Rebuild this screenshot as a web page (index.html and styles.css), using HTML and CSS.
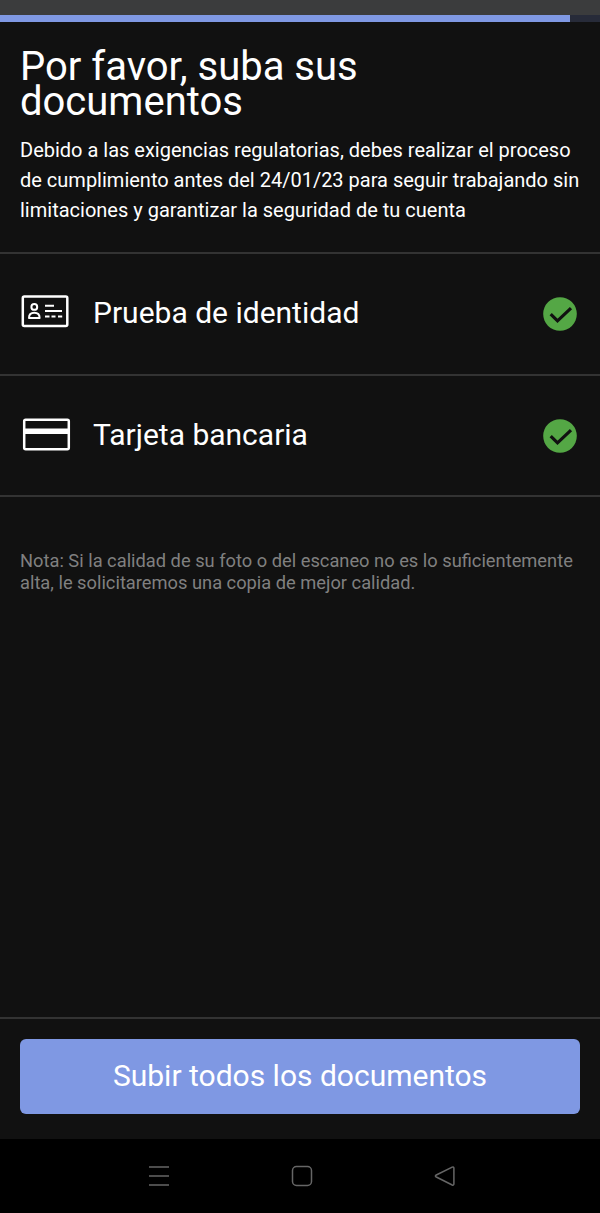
FILE: index.html
```
<!DOCTYPE html>
<html lang="es">
<head>
    <meta charset="UTF-8">
    <meta name="viewport" content="width=device-width, initial-scale=1.0">
    <title>Por favor, suba sus documentos</title>
    <link rel="stylesheet" href="styles.css">
</head>
<body>
    <div class="top-bar"></div>
    <div class="progress">
        <div class="progress-fill" style="width: 95%"></div>
    </div>

    <header class="intro">
        <h1>Por favor, suba sus documentos</h1>
        <p>Debido a las exigencias regulatorias, debes realizar el proceso de cumplimiento antes del 24/01/23 para seguir trabajando sin limitaciones y garantizar la seguridad de tu cuenta</p>
    </header>

    <main class="content">
        <ul class="documents">
            <li class="document">
                <svg class="document-icon" width="54" height="40" viewBox="0 0 54 40" fill="none" stroke="#fff" stroke-width="2">
                    <rect x="2.8" y="3.5" width="44.5" height="29.5" rx="1.5" stroke-width="2.5"/>
                    <circle cx="14.3" cy="13.9" r="2.9"/>
                    <path d="M9 25c0-3.600 2-5.200 5.300-5.200s5.300 1.600 5.300 5.200z" stroke-linejoin="round"/>
                    <path d="M25 12.8h9M25 18h17M25 23.500h4.500M31.500 23.500h4M38 23.500h4.200"/>
                </svg>
                <span class="document-name">Prueba de identidad</span>
                <svg class="check" width="34" height="34" viewBox="0 0 34 34">
                    <circle cx="17" cy="17" r="16.8" fill="#54a745"/>
                    <path d="M7.700 17.200l6.800 6.700L28 11.200" fill="none" stroke="#111" stroke-width="3.2"/>
                </svg>
            </li>
            <li class="document">
                <svg class="document-icon" width="54" height="40" viewBox="0 0 54 40" fill="none" stroke="#fff">
                    <rect x="4.200" y="4.700" width="44.600" height="29.600" rx="1.500" stroke-width="2.500"/>
                    <path d="M4 16.200h45" stroke-width="5.400"/>
                </svg>
                <span class="document-name">Tarjeta bancaria</span>
                <svg class="check" width="34" height="34" viewBox="0 0 34 34">
                    <circle cx="17" cy="17" r="16.8" fill="#54a745"/>
                    <path d="M7.700 17.200l6.800 6.700L28 11.200" fill="none" stroke="#111" stroke-width="3.2"/>
                </svg>
            </li>
        </ul>
        <p class="note">Nota: Si la calidad de su foto o del escaneo no es lo suficientemente alta, le solicitaremos una copia de mejor calidad.</p>
    </main>

    <footer class="actions">
        <button class="upload" type="button">Subir todos los documentos</button>
    </footer>

    <nav class="system-nav">
        <svg width="24" height="24" viewBox="0 0 24 24">
            <path d="M2 3h20M2 12h20M2 21h20"/>
        </svg>
        <svg width="24" height="24" viewBox="0 0 24 24">
            <rect x="2.500" y="2.500" width="19" height="19" rx="4"/>
        </svg>
        <svg width="24" height="24" viewBox="0 0 24 24">
            <path d="M19.200 3.100L3.300 11q-1.800 1 0 2l15.900 8q1.700.600 1.700-1.200V4.300q0-1.800-1.700-1.200z"/>
        </svg>
    </nav>
</body>
</html>
```

FILE: styles.css
```
* {
    box-sizing: border-box;
}
body {
    font-family: Roboto, "Liberation Sans", sans-serif;
    background-color: #111;
    color: #fff;
    margin: 0;
    height: 1213px;
    display: flex;
    flex-direction: column;
}
.top-bar {
    height: 15px;
    background-color: #3b3c3d;
}
.progress {
    height: 7px;
    background-color: #272b39;
}
.progress-fill {
    height: 100%;
    background-color: #7f98e3;
}
.intro {
    height: 230px;
    padding: 27px 20px 0;
}
.intro h1 {
    margin: 0 0 16px;
    max-width: 400px;
    font-size: 40px;
    font-weight: 400;
    line-height: 35px;
}
.intro p {
    margin: 0;
    font-size: 20px;
    line-height: 30px;
}
.content {
    flex: 1;
}
.documents {
    list-style: none;
    margin: 0;
    padding: 0;
    border-top: 2px solid #333;
}
.document {
    display: flex;
    align-items: center;
    height: 122px;
    padding: 0 23px 0 20px;
    border-bottom: 2px solid #333;
}
.document:last-child {
    height: 121px;
}
.document-icon {
    margin: 0 19px 2px 0;
}
.document-name {
    flex: 1;
    padding-bottom: 3px;
    font-size: 30px;
}
.note {
    margin: 53px 20px 0;
    font-size: 18.3px;
    line-height: 22px;
    color: #808080;
}
.actions {
    height: 122px;
    padding: 20px 20px 0;
    border-top: 2px solid #333;
}
.upload {
    display: block;
    width: 100%;
    height: 75px;
    padding: 0 0 2px;
    border: none;
    border-radius: 6px;
    background-color: #7f98e3;
    color: #fff;
    font-family: inherit;
    font-size: 30px;
    cursor: pointer;
}
.system-nav {
    display: flex;
    justify-content: center;
    gap: 119px;
    height: 74px;
    padding: 25px 0 0 4px;
    background-color: #000;
}
.system-nav svg {
    fill: none;
    stroke: #666;
    stroke-width: 1.5;
}
```
